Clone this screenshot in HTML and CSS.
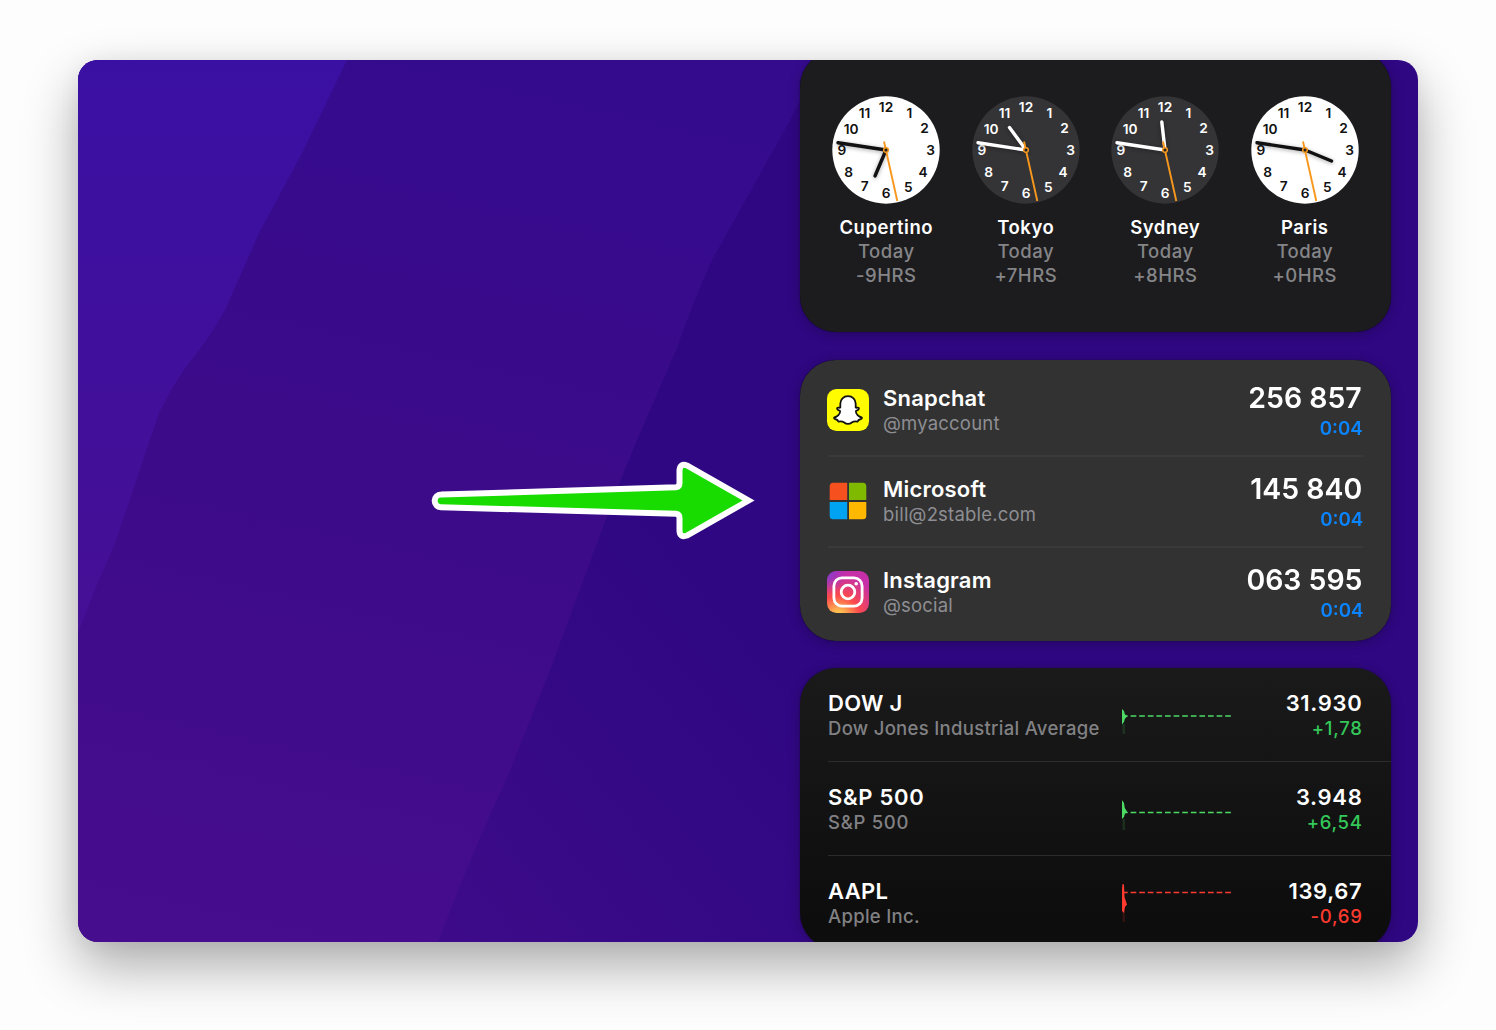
FILE: index.html
```html
<!DOCTYPE html>
<html lang="en">
<head>
<meta charset="utf-8">
<title>Widgets</title>
<link rel="stylesheet" href="styles.css">
</head>
<body>
<svg width="0" height="0" class="defs" aria-hidden="true">
  <defs>
    <symbol id="dial" viewBox="-54 -54 108 108">
      <circle r="53.7" class="dial-face"/>
      <g class="dial-num">
        <text x="0" y="-38.4">12</text><text x="23.3" y="-31.6">1</text><text x="38.5" y="-16.7">2</text>
        <text x="44.7" y="5.2">3</text><text x="37" y="27">4</text><text x="22.3" y="41.6">5</text>
        <text x="0" y="47.800">6</text><text x="-21.200" y="41.3">7</text><text x="-37.3" y="27">8</text>
        <text x="-44.2" y="5.2">9</text><text x="-34.8" y="-16.2">10</text><text x="-21.4" y="-32.2">11</text>
      </g>
    </symbol>
    <symbol id="sweep" viewBox="-54 -54 108 108">
      <path d="M-2-8.5 11.3 51" stroke="#f7981d" stroke-width="1.9"/>
      <circle r="2.3" fill="#222" stroke="#f7981d" stroke-width="1.5"/>
    </symbol>
  </defs>
</svg>
<main class="desktop">
  <svg class="wallpaper" viewBox="0 0 1340 882" preserveAspectRatio="none">
    <defs>
      <linearGradient id="w1" x1="0" y1="0" x2="0" y2="1"><stop offset="0" stop-color="#3a10a3"/><stop offset="1" stop-color="#460f95"/></linearGradient>
      <linearGradient id="w2" gradientUnits="userSpaceOnUse" x1="380" y1="0" x2="180" y2="882"><stop offset="0" stop-color="#350b8e"/><stop offset=".5" stop-color="#3c0b89"/><stop offset="1" stop-color="#460d8e"/></linearGradient>
      <linearGradient id="w3" gradientUnits="userSpaceOnUse" x1="380" y1="882" x2="720" y2="600"><stop offset="0" stop-color="#3d0b89"/><stop offset=".5" stop-color="#350986"/><stop offset="1" stop-color="#2f0782"/></linearGradient>
    </defs>
    <rect width="1340" height="882" fill="url(#w3)"/>
    <path d="M0 0H742L716 53L673 130L634 200Q615 242 598 290L559 380Q540 425 522 475L472 610L428 720Q395 790 360 882H0Z" fill="url(#w2)"/>
    <path d="M0 0H269L224 93L181 173L147 250Q130 280 108 307Q92 330 81 353Q68 390 55 430L38 480Q28 505 18 527L4 563L0 572Z" fill="url(#w1)"/>
  </svg>

  <svg class="arrow" viewBox="0 0 350 100" width="350" height="100">
    <path d="M21 44.500 256 37.300Q259.500 36.800 259.500 33V20.500Q260 13 267 15.500L328.500 50.500 267 85.500Q260 88 259.500 81V68Q259.500 64.300 256 63.800L21 57.200A6.350 6.350 0 0 1 21 44.500Z" fill="#18dc00" stroke="#fff" stroke-width="6"/>
  </svg>

  <div class="widgets">
    <section class="card clocks">
      <div class="city">
        <svg class="clock day" viewBox="-54 -54 108 108"><use href="#dial" x="-54" y="-54" width="108" height="108"/><g class="hands"><path d="M0 0-48-7.300M0 0-11 26"/></g><use href="#sweep" x="-54" y="-54" width="108" height="108"/></svg>
        <b>Cupertino</b><span>Today</span><span>-9HRS</span>
      </div>
      <div class="city">
        <svg class="clock night" viewBox="-54 -54 108 108"><use href="#dial" x="-54" y="-54" width="108" height="108"/><g class="hands"><path d="M0 0-48-7.300M0 0-16.500-22.500"/></g><use href="#sweep" x="-54" y="-54" width="108" height="108"/></svg>
        <b>Tokyo</b><span>Today</span><span>+7HRS</span>
      </div>
      <div class="city">
        <svg class="clock night" viewBox="-54 -54 108 108"><use href="#dial" x="-54" y="-54" width="108" height="108"/><g class="hands"><path d="M0 0-48-7.300M0 0-3.200-28"/></g><use href="#sweep" x="-54" y="-54" width="108" height="108"/></svg>
        <b>Sydney</b><span>Today</span><span>+8HRS</span>
      </div>
      <div class="city">
        <svg class="clock day" viewBox="-54 -54 108 108"><use href="#dial" x="-54" y="-54" width="108" height="108"/><g class="hands"><path d="M0 0-48-7.300M0 0 26.500 11"/></g><use href="#sweep" x="-54" y="-54" width="108" height="108"/></svg>
        <b>Paris</b><span>Today</span><span>+0HRS</span>
      </div>
    </section>

    <section class="card codes">
      <div class="code-row">
        <svg class="logo" viewBox="0 0 42 42">
          <rect width="42" height="42" rx="9.500" fill="#fffc00"/>
          <path d="M21 7.200C16.500 7.200 13.300 10.300 13.300 14.800V18.600C12.400 19.200 11 18 10.200 19C9.600 20.200 11 21 13.100 22C13.600 25 10 28 7.300 28.500C6.200 29.200 8.200 30.500 10.400 31C11.200 31.500 10.800 32.700 11.800 32.600C13.300 32.300 15 32 16.800 33.200C18.300 34.300 19.400 34.900 21 34.900S23.700 34.300 25.200 33.200C27 32 28.700 32.300 30.200 32.600C31.200 32.700 30.800 31.500 31.600 31C33.800 30.500 35.800 29.200 34.700 28.500C32 28 28.400 25 28.900 22C31 21 32.400 20.200 31.800 19C31 18 29.600 19.200 28.700 18.600V14.800C28.700 10.300 25.500 7.200 21 7.200Z" fill="#fff" stroke="#111" stroke-width="1.800" stroke-linejoin="round"/>
        </svg>
        <div class="label"><b>Snapchat</b><span>@myaccount</span></div>
        <div class="code"><b>256 857</b><span>0:04</span></div>
      </div>
      <div class="code-row">
        <svg class="logo" viewBox="0 0 42 42">
          <path d="M20.200 2.700V20H2.700V6.200A3.500 3.500 0 0 1 6.200 2.700Z" fill="#f6501e"/>
          <path d="M22 2.700V20H39.300V6.200A3.500 3.500 0 0 0 35.800 2.700Z" fill="#7fb900"/>
          <path d="M20.200 39.300V22H2.700V35.800A3.500 3.500 0 0 0 6.200 39.300Z" fill="#00a3f1"/>
          <path d="M22 39.300V22H39.300V35.800A3.500 3.500 0 0 1 35.800 39.300Z" fill="#ffb800"/>
        </svg>
        <div class="label"><b>Microsoft</b><span>bill@2stable.com</span></div>
        <div class="code"><b>145 840</b><span>0:04</span></div>
      </div>
      <div class="code-row">
        <svg class="logo" viewBox="0 0 42 42">
          <defs>
            <radialGradient id="ig1" cx=".27" cy="1.080" r="1"><stop offset="0" stop-color="#fec850"/><stop offset=".15" stop-color="#fdb850"/><stop offset=".5" stop-color="#fb4a4c"/><stop offset="1" stop-color="#c62fa8"/></radialGradient>
            <radialGradient id="ig2" cx="0" cy=".05" r=".5"><stop offset="0" stop-color="#7a3fd0"/><stop offset="1" stop-color="#a030c0" stop-opacity="0"/></radialGradient>
          </defs>
          <rect width="42" height="42" rx="9.500" fill="url(#ig1)"/><rect width="42" height="42" rx="9.500" fill="url(#ig2)"/>
          <g fill="none" stroke="#fff" stroke-width="2.800"><rect x="6.900" y="6.900" width="28.200" height="28.200" rx="8"/><circle cx="21" cy="21" r="6.800"/></g>
          <circle cx="29.200" cy="12.800" r="1.800" fill="#fff"/>
        </svg>
        <div class="label"><b>Instagram</b><span>@social</span></div>
        <div class="code"><b>063 595</b><span>0:04</span></div>
      </div>
    </section>

    <section class="card stocks">
      <div class="stock up">
        <div class="label"><b>DOW J</b><span>Dow Jones Industrial Average</span></div>
        <svg class="spark" viewBox="0 0 110 60"><path class="trail" d="M1.500 38H4V48H1.500Z"/><path class="spike" d="M1 23 3 25 3.800 28 6 30.500 3.800 33 3 36 1 38.500Z"/><path class="base" d="M1 30H110"/></svg>
        <div class="price"><b>31.930</b><span>+1,78</span></div>
      </div>
      <div class="stock up">
        <div class="label"><b class="wide">S&amp;P 500</b><span class="wide">S&amp;P 500</span></div>
        <svg class="spark" viewBox="0 0 110 60"><path class="trail" d="M1.500 39H4V50H1.500Z"/><path class="spike" d="M1 20 3 23 3.800 28 6 31.500 3.800 34 3 37 1 39Z"/><path class="base" d="M1 32.500H110"/></svg>
        <div class="price"><b>3.948</b><span>+6,54</span></div>
      </div>
      <div class="stock down">
        <div class="label"><b>AAPL</b><span>Apple Inc.</span></div>
        <svg class="spark" viewBox="0 0 110 60"><path class="trail" d="M1.500 38H4V49H1.500Z"/><path class="spike" d="M1 16 1.500 11 3 11.500 3.500 24 6 31.500 4 34 3 40 1 38Z"/><path class="base" d="M1 19.500H110"/></svg>
        <div class="price"><b>139,67</b><span>-0,69</span></div>
      </div>
    </section>
  </div>
</main>
</body>
</html>
```

FILE: styles.css
```css
* { box-sizing: border-box; }

body {
  margin: 0;
  height: 1030px;
  padding: 60px 78px;
  overflow: hidden;
  background: #fdfdfd;
  font-family: Inter, "Liberation Sans", sans-serif;
  color: #fff;
}

.defs { position: absolute; }

.desktop {
  position: relative;
  width: 1340px;
  height: 882px;
  border-radius: 20px;
  box-shadow: 0 24px 54px rgba(0, 0, 0, .33), 0 0 22px rgba(0, 0, 0, .05);
  display: flex;
  justify-content: flex-end;
  overflow: hidden;
}

.wallpaper {
  position: absolute;
  inset: 0;
  width: 100%;
  height: 100%;
}

/* annotation floating over the wallpaper */
.arrow {
  position: absolute;
  left: 342px;
  top: 390px;
}

.widgets {
  position: relative;
  display: flex;
  flex-direction: column;
  gap: 27px;
  width: 591px;
  height: 900px;
  margin: -9px 27px 0 0;
}

.card {
  flex: none;
  height: 281px;
  border-radius: 36px;
  box-shadow: 0 0 1px rgba(0, 0, 0, .8), 0 2px 12px rgba(0, 0, 0, .25);
  overflow: hidden;
}

.card b { font-weight: 600; }

.clocks {
  display: grid;
  grid-template-columns: repeat(4, 1fr);
  padding: 45px 16.500px 0;
  background: #1c1c1e;
}

.city {
  display: flex;
  flex-direction: column;
  align-items: center;
  font-size: 18.500px;
  line-height: 24px;
  letter-spacing: .5px;
}

.city span {
  color: #858588;
  font-weight: 550;
}

.clock {
  width: 108px;
  height: 108px;
  margin-bottom: 10.500px;
}

.day { --face: #fff; --ink: #111; }
.night { --face: #343436; --ink: #fff; }
.dial-face { fill: var(--face); }

.dial-num {
  fill: var(--ink);
  font-size: 13.700px;
  font-weight: 600;
  letter-spacing: 0;
  text-anchor: middle;
}

.hands {
  fill: none;
  stroke: var(--ink);
  stroke-width: 3.400px;
  stroke-linecap: round;
  filter: drop-shadow(0 1px 2px rgba(0, 0, 0, .35));
}

.codes {
  margin-top: 1px;
  padding: 5.500px 28px 0;
  background: #323232;
}

.code-row {
  display: flex;
  align-items: center;
  height: 91px;
  border-bottom: 2px solid #3a3a3b;
}

.code-row:last-child { border-bottom-color: transparent; }

.logo {
  width: 42px;
  height: 42px;
  margin-left: -1px;
}

.label {
  flex: 1;
  display: flex;
  flex-direction: column;
}

.label b {
  font-size: 22px;
  line-height: 26px;
  letter-spacing: .2px;
}

.label span {
  color: #8e8e93;
  font-size: 18.500px;
  line-height: 25px;
  letter-spacing: .2px;
}

.code-row .label { margin-left: 14px; }

.code {
  display: flex;
  flex-direction: column;
  align-items: flex-end;
  padding-top: 2px;
  transform: scaleX(.980);
  transform-origin: right;
}

.code b {
  padding-right: 1px;
  font-size: 29px;
  line-height: 34px;
}

.code span {
  color: #0a84ff;
  font-size: 19px;
  font-weight: 600;
  line-height: 27px;
}

.stocks { background: linear-gradient(#1a1a1a, #0d0d0d 90%); }

.stock {
  display: flex;
  align-items: center;
  height: 93.800px;
  margin-left: 28px;
  padding: 3px 28.500px 0 0;
  border-bottom: 1px solid #2c2c2e;
}

.stock .label b { letter-spacing: .3px; }

.stock .label span {
  color: #818184;
  font-weight: 450;
  letter-spacing: .3px;
}

.stock .label .wide { letter-spacing: .7px; }

.spark {
  width: 110px;
  height: 60px;
}

.spike { fill: currentColor; }
.base { stroke: currentColor; stroke-width: 1.700px; stroke-dasharray: 5.700 2.900; }
.trail { fill: currentColor; opacity: .15; }
.up { --tone: #34c759; }
.down { --tone: #ff3b30; }
.up .spark { color: #4cd964; }
.down .spark { color: #ff3b30; }

.price {
  width: 131.500px;
  display: flex;
  flex-direction: column;
  align-items: flex-end;
}

.price b {
  font-size: 22px;
  line-height: 26px;
  letter-spacing: .7px;
}

.price span {
  color: var(--tone);
  font-size: 18.500px;
  font-weight: 500;
  line-height: 25px;
  letter-spacing: .7px;
}
```
